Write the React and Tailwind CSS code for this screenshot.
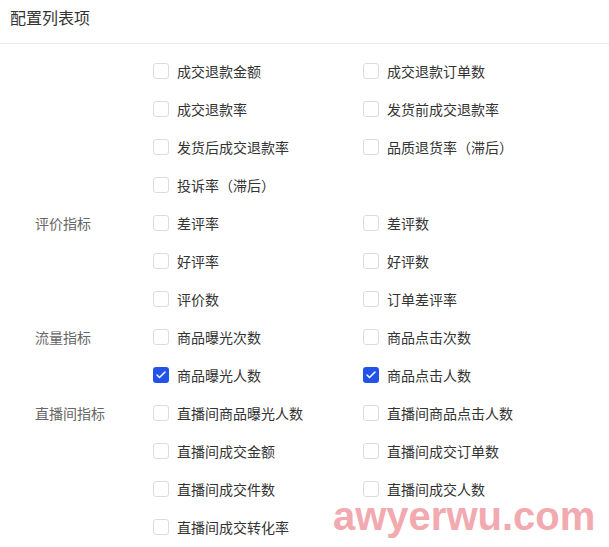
import { Check } from 'lucide-react';

// config list: category label + two columns of checkbox options
const GROUPS = [
  {
    label: '',
    items: ['成交退款金额', '成交退款订单数', '成交退款率', '发货前成交退款率', '发货后成交退款率', '品质退货率（滞后）', '投诉率（滞后）'],
  },
  {
    label: '评价指标',
    items: ['差评率', '差评数', '好评率', '好评数', '评价数', '订单差评率'],
  },
  {
    label: '流量指标',
    items: ['商品曝光次数', '商品点击次数', '商品曝光人数', '商品点击人数'],
    checked: ['商品曝光人数', '商品点击人数'],
  },
  {
    label: '直播间指标',
    items: ['直播间商品曝光人数', '直播间商品点击人数', '直播间成交金额', '直播间成交订单数', '直播间成交件数', '直播间成交人数', '直播间成交转化率'],
  },
];

const Box = ({ on }) =>
  on ? (
    <span className="w-4 h-4 rounded-[3px] bg-[#2352e8] flex items-center justify-center flex-shrink-0">
      <Check size={12} strokeWidth={3} className="text-white" />
    </span>
  ) : (
    <span className="w-4 h-4 rounded-[3px] border border-[#dcdcdc] bg-white flex-shrink-0" />
  );

export default function App() {
  return (
    <div className="relative w-[609px] h-[547px] bg-white overflow-hidden font-['Noto_Sans_CJK_SC',sans-serif] text-[14px] text-[#333]">
      <div className="h-[44px] border-b border-[#ebebeb] pl-[10px] pt-[6px]">
        <span className="text-[16px] leading-[22px] text-[#333]">配置列表项</span>
      </div>

      <div className="pl-[35px] pt-[8px] flex flex-col">
        {GROUPS.map((g, gi) => {
          const rows = [];
          for (let i = 0; i < g.items.length; i += 2) rows.push(g.items.slice(i, i + 2));
          return rows.map((row, ri) => (
            <div key={`${gi}-${ri}`} className="h-[38px] flex items-center">
              <div className="w-[118px] text-[#666]">{ri === 0 ? g.label : ''}</div>
              {row.map((it) => (
                <div key={it} className="w-[210px] flex items-center gap-[8px]">
                  <Box on={g.checked?.includes(it)} />
                  <span className="leading-none">{it}</span>
                </div>
              ))}
            </div>
          ));
        })}
      </div>

      <div className="absolute left-[333px] top-[496px] text-[40px] font-bold leading-none text-[#f3a9b0] font-['Liberation_Sans',sans-serif]">
        awyerwu.com
      </div>
    </div>
  );
}
